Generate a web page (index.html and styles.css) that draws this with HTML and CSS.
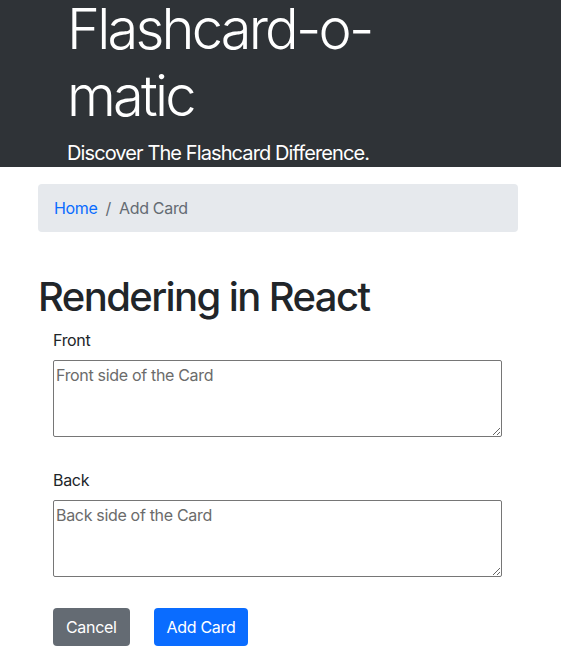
FILE: index.html
```html
<!DOCTYPE html>
<html lang="en">
<head>
<meta charset="utf-8">
<title>Flashcard-o-matic</title>
<link rel="stylesheet" href="styles.css">
</head>
<body>
<header class="jumbo">
  <div class="jumbo-inner">
    <h1 class="display">Flashcard-o-matic</h1>
    <p class="lead">Discover The Flashcard Difference.</p>
  </div>
</header>
<main class="container">
  <nav class="crumbs">
    <a class="crumb-link" href="#">Home</a>
    <span class="crumb-sep">/</span>
    <span class="crumb-current">Add Card</span>
  </nav>
  <h2 class="title">Rendering in React</h2>
  <form class="card-form">
    <label class="field-label" for="front">Front</label>
    <textarea class="field" id="front" placeholder="Front side of the Card"></textarea>
    <label class="field-label" for="back">Back</label>
    <textarea class="field" id="back" placeholder="Back side of the Card"></textarea>
    <div class="actions">
      <button type="button" class="btn btn-gray">Cancel</button>
      <button type="submit" class="btn btn-blue">Add Card</button>
    </div>
  </form>
</main>
</body>
</html>
```
FILE: styles.css
```css
* { box-sizing: border-box; }
body {
  margin: 0;
  font-family: Inter, "Noto Sans", sans-serif;
  font-size: 16px;
  line-height: 24px;
  letter-spacing: -0.02em;
  color: #212529;
  background: #fff;
}
.jumbo {
  background: #2f3337;
  color: #fff;
}
.jumbo-inner {
  padding-left: 67px;
  width: 480px;
}
.display {
  margin: -4px 0 0 0;
  font-size: 56px;
  line-height: 67px;
  font-weight: 300;
  letter-spacing: -0.05em;
}
.lead {
  margin: 9px 0 0 0;
  font-size: 20px;
  line-height: 28px;
  font-weight: 400;
  letter-spacing: -0.045em;
}
.container {
  margin-left: 38px;
  width: 480px;
}
.crumbs {
  margin-top: 17px;
  height: 48px;
  padding: 12px 16px;
  background: #e6e9ed;
  border-radius: 4px;
  display: flex;
  gap: 8px;
}
.crumb-link { color: #0a6cff; text-decoration: none; }
.crumb-sep, .crumb-current { color: #646b73; }
.title {
  margin: 41px 0 7px 0;
  font-size: 40px;
  line-height: 48px;
  font-weight: 500;
  letter-spacing: -0.04em;
}
.card-form {
  padding-left: 15px;
  display: flex;
  flex-direction: column;
  align-items: flex-start;
}
.field-label {
  margin-bottom: 8px;
}
.field {
  display: block;
  width: 449px;
  height: 77px;
  border: 1px solid #767676;
  border-radius: 2px;
  padding: 4px 2px 2px;
  font-family: inherit;
  font-size: 16px;
  line-height: 20px;
  letter-spacing: -0.02em;
  margin-bottom: 31px;
  resize: vertical;
}
.field::placeholder { color: #6b6b6b; }
.actions {
  display: flex;
  gap: 24px;
}
.btn {
  font-family: inherit;
  font-size: 16px;
  line-height: 24px;
  letter-spacing: -0.02em;
  padding: 6px 12px;
  border: 1px solid transparent;
  border-radius: 4px;
  color: #fff;
}
.btn-gray { background: #646b73; }
.btn-blue { background: #0a6cff; }
```
